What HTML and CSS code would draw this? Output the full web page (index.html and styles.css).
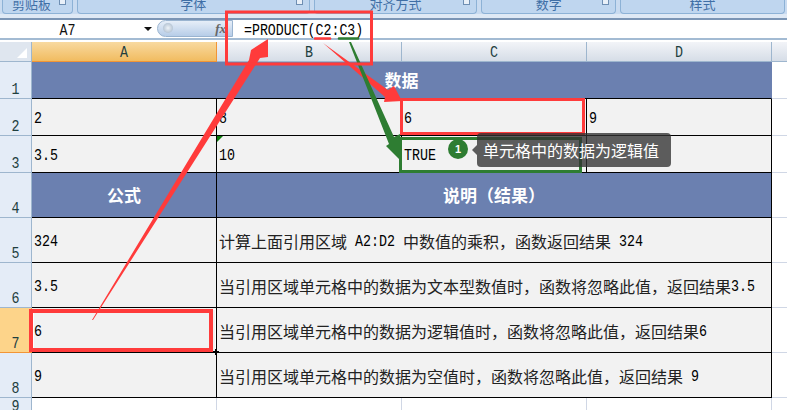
FILE: index.html
```html
<!DOCTYPE html>
<html lang="zh">
<head>
<meta charset="utf-8">
<title>PRODUCT</title>
<link rel="stylesheet" href="styles.css">
</head>
<body>
<div class="app">
  <div class="ribbon">
    <div class="group g1">剪贴板<i class="launch"></i></div>
    <div class="group g2">字体<i class="launch"></i></div>
    <div class="group g3">对齐方式<i class="launch"></i></div>
    <div class="group g4">数字<i class="launch"></i></div>
    <div class="group g5">样式</div>
  </div>
  <div class="fbar">
    <div class="namebox"><span class="name m">A7</span><i class="drop"></i></div>
    <div class="fnbtn"><i class="knob"></i><span class="fx">fx</span></div>
    <div class="formula"><span class="m">=PRODUCT(C2:C3)</span></div>
  </div>
  <div class="sheet">
    <div class="corner"><i class="tri"></i></div>
    <div class="ch on"><span class="m">A</span></div><div class="ch"><span class="m">B</span></div><div class="ch"><span class="m">C</span></div><div class="ch"><span class="m">D</span></div><div class="ch end"></div>

    <div class="rh"><span class="m">1</span></div>
    <div class="hd span4 nob">数据</div>
    <div class="blank"></div>

    <div class="rh"><span class="m">2</span></div>
    <div class="c"><span class="m">2</span></div><div class="c"><span class="m">8</span></div><div class="c"><span class="m">6</span></div><div class="c"><span class="m">9</span></div>
    <div class="blank"></div>

    <div class="rh"><span class="m">3</span></div>
    <div class="c"><span class="m">3.5</span></div><div class="c tick"><span class="m">10</span></div><div class="c"><span class="m">TRUE</span></div><div class="c"></div>
    <div class="blank"></div>

    <div class="rh"><span class="m">4</span></div>
    <div class="hd">公式</div><div class="hd span3">说明（结果）</div>
    <div class="blank"></div>

    <div class="rh"><span class="m">5</span></div>
    <div class="c"><span class="m">324</span></div>
    <div class="c span3"><span class="zh">计算上面引用区域</span><span class="m"> A2:D2 </span><span class="zh">中数值的乘积，函数返回结果</span><span class="m"> 324</span></div>
    <div class="blank"></div>

    <div class="rh"><span class="m">6</span></div>
    <div class="c"><span class="m">3.5</span></div>
    <div class="c span3"><span class="zh">当引用区域单元格中的数据为文本型数值时，函数将忽略此值，返回结果</span><span class="m">3.5</span></div>
    <div class="blank"></div>

    <div class="rh on"><span class="m">7</span></div>
    <div class="c sel"><span class="m">6</span></div>
    <div class="c span3"><span class="zh">当引用区域单元格中的数据为逻辑值时，函数将忽略此值，返回结果</span><span class="m">6</span></div>
    <div class="blank"></div>

    <div class="rh"><span class="m">8</span></div>
    <div class="c"><span class="m">9</span></div>
    <div class="c span3"><span class="zh">当引用区域单元格中的数据为空值时，函数将忽略此值，返回结果</span><span class="m"> 9</span></div>
    <div class="blank"></div>

    <div class="rh"><span class="m">9</span></div>
    <div class="e"></div><div class="e"></div><div class="e"></div><div class="e"></div><div class="blank"></div>
  </div>

  <svg class="marks" width="787" height="410" viewBox="0 0 787 410" aria-hidden="true">
    <g class="r">
      <polygon points="92,320 249,60 251,50 268,39 268,57 260,58 93,320"/>
      <polygon points="323,43 388,90 394,86 402,101 384,102 385,97"/>
    </g>
    <g class="g">
      <polygon points="349,42 351,42 394,137 400,134 402,162 386,146 389,144"/>
    </g>
    <rect class="rr" x="226.5" y="12" width="145" height="52"/>
    <rect class="rr" x="401.5" y="99.5" width="182" height="34"/>
    <rect class="rr wide" x="31" y="311" width="180" height="39"/>
    <rect class="gg" x="400.5" y="138.5" width="180" height="33"/>
    <path class="ru" d="M315 38.5h15"/>
    <path class="gu" d="M339 38.5h19"/>
    <path class="plus" d="M216 349v6M213 352h6"/>
  </svg>

  <div class="badge">1</div>
  <div class="tip">单元格中的数据为逻辑值</div>
</div>
</body>
</html>
```
FILE: styles.css
```css
* { box-sizing: border-box; }
html, body { margin: 0; padding: 0; background: #fff; }
body { width: 787px; height: 410px; overflow: hidden; }
.app {
  position: relative;
  width: 787px;
  height: 410px;
  overflow: hidden;
  display: flex;
  flex-direction: column;
  font-family: "Liberation Mono", "Noto Sans CJK SC", monospace;
}
.m {
  display: inline-block;
  white-space: pre;
  transform: translateY(1px) scaleY(1.25);
}

/* ribbon */
.ribbon {
  height: 20px;
  flex: none;
  display: flex;
  gap: 4px;
  padding: 0 2px;
  background: linear-gradient(#c9dbf0 0 14px, #dfe9f5 14px 18px, #7b95b5 18px 20px);
}
.group {
  position: relative;
  height: 14px;
  border: 1px solid #8db2d6;
  border-top: 0;
  border-radius: 0 0 4px 4px;
  background: #bfd6ef;
  color: #3f6fa6;
  font: 13px/8px "Noto Sans CJK SC", sans-serif;
  text-align: center;
  overflow: hidden;
}
.g1 { width: 71px; padding-right: 12px; }
.g2 { width: 233px; }
.g3 { width: 164px; }
.g4 { width: 135px; }
.g5 { width: 165px; }
.launch {
  position: absolute;
  right: 6px;
  top: 0;
  width: 7px;
  height: 5px;
  background: #e9f0f8;
  border: 1px solid #6f8fb3;
  border-top: 0;
}

/* formula bar */
.fbar {
  height: 20px;
  flex: none;
  display: flex;
  background: #fff;
  border-bottom: 2px solid #a3bbd3;
}
.namebox {
  width: 157px;
  display: flex;
  align-items: center;
  justify-content: center;
  position: relative;
  font-size: 13.33px;
  color: #111;
}
.name { margin-right: 22px; }
.drop {
  position: absolute;
  left: 144px;
  top: 7px;
  border: 4px solid transparent;
  border-top: 4px solid #111;
  border-bottom: 0;
}
.fnbtn {
  width: 76px;
  height: 17px;
  position: relative;
  border: 1px solid #9ab4d0;
  border-radius: 9px 0 0 9px;
  background: linear-gradient(#e6eef8, #b7cde8);
}
.knob {
  position: absolute;
  left: 5px;
  top: 2px;
  width: 10px;
  height: 10px;
  border-radius: 50%;
  background: radial-gradient(#eef3f8, #9fb2c6);
}
.fx {
  position: absolute;
  right: 6px;
  top: -1px;
  font: italic bold 13px/17px "Liberation Serif", serif;
  color: #666;
}
.formula {
  flex: 1;
  padding-left: 11px;
  font-size: 13.25px;
  line-height: 20px;
  color: #000;
}

/* sheet */
.sheet {
  margin-top: 2px;
  flex: none;
  display: grid;
  grid-template-columns: 32px 185px 185px 185px 185px 15px;
  grid-template-rows: 20px 37px 37px 37px 45px 45px 45px 45px 45px;
  font-size: 13.33px;
  color: #000;
}
.corner {
  position: relative;
  background: #dfe6ef;
  border-right: 1px solid #9eb6ce;
  border-bottom: 1px solid #9eb6ce;
}
.tri {
  position: absolute;
  right: 4px;
  bottom: 3px;
  border-left: 10px solid transparent;
  border-bottom: 10px solid #fff;
}
.ch {
  display: flex;
  align-items: center;
  justify-content: center;
  background: linear-gradient(#f2f4f8, #d6dde7);
  border-right: 1px solid #9eb6ce;
  border-bottom: 1px solid #9eb6ce;
  color: #1f3f3f;
}
.ch.on {
  background: linear-gradient(#f8d9a0, #f1bc60);
  border-right-color: #f29536;
  border-bottom-color: #f29536;
}
.ch.end { border-right: 0; }
.rh {
  display: flex;
  align-items: flex-end;
  justify-content: center;
  background: #e4ecf7;
  border-right: 1px solid #9eb6ce;
  border-bottom: 1px solid #9eb6ce;
  color: #1f3f3f;
  line-height: 15px;
  padding-bottom: 2px;
}
.rh.on {
  background: #fdd48a;
  border-right-color: #f29536;
  border-bottom-color: #f29536;
}
.c {
  position: relative;
  display: flex;
  align-items: center;
  padding: 1px 0 0 2px;
  background: #f2f2f2;
  border-right: 1px solid #000;
  border-bottom: 1px solid #000;
  white-space: pre;
}
.hd {
  display: flex;
  align-items: center;
  justify-content: center;
  background: #6b80b0;
  color: #fff;
  font: bold 17px/20px "Noto Sans CJK SC", sans-serif;
  border-right: 1px solid #000;
  border-bottom: 1px solid #000;
}
.hd.nob { border-right-color: #6b80b0; }
.span3 { grid-column: span 3; }
.span4 { grid-column: span 4; }
.zh { font: 16px/20px "Noto Sans CJK SC", sans-serif; color: #222; }
.blank {
  background: #fff;
  border-bottom: 1px solid #d0d7e5;
}
.e {
  background: #fff;
  border-right: 1px solid #d0d7e5;
}
.sel {
  outline: 1px solid #fff;
  outline-offset: -2px;
}
.tick::before {
  content: "";
  position: absolute;
  left: 0;
  top: 0;
  border-top: 6px solid #0a7a0a;
  border-right: 6px solid transparent;
}

/* annotations */
.marks { position: absolute; left: 0; top: 0; pointer-events: none; }
.r polygon { fill: #ff3b3b; }
.g polygon { fill: #2e7d32; }
.rr { fill: none; stroke: #ff3b3b; stroke-width: 3; }
.rr.wide { stroke-width: 4; }
.gg { fill: none; stroke: #2e7d32; stroke-width: 3; }
.ru { stroke: #ff3b3b; stroke-width: 2.5; stroke-linecap: round; }
.gu { stroke: #2e7d32; stroke-width: 2.5; stroke-linecap: round; }
.plus { stroke: #000; stroke-width: 2; }
.badge {
  position: absolute;
  left: 448px;
  top: 139px;
  width: 20px;
  height: 20px;
  border-radius: 50%;
  background: #2e7d32;
  color: #fff;
  font: bold 11px/20px "Liberation Sans", sans-serif;
  text-align: center;
}
.tip {
  position: absolute;
  left: 477px;
  top: 133px;
  width: 194px;
  height: 34px;
  border-radius: 4px;
  background: rgba(50, 50, 50, .78);
  color: #fff;
  font: 16px/34px "Noto Sans CJK SC", sans-serif;
  padding-left: 6px;
  white-space: nowrap;
}
.tip::before {
  content: "";
  position: absolute;
  left: -5px;
  top: 12px;
  border-top: 5px solid transparent;
  border-bottom: 5px solid transparent;
  border-right: 5px solid rgba(50, 50, 50, .78);
}
```
